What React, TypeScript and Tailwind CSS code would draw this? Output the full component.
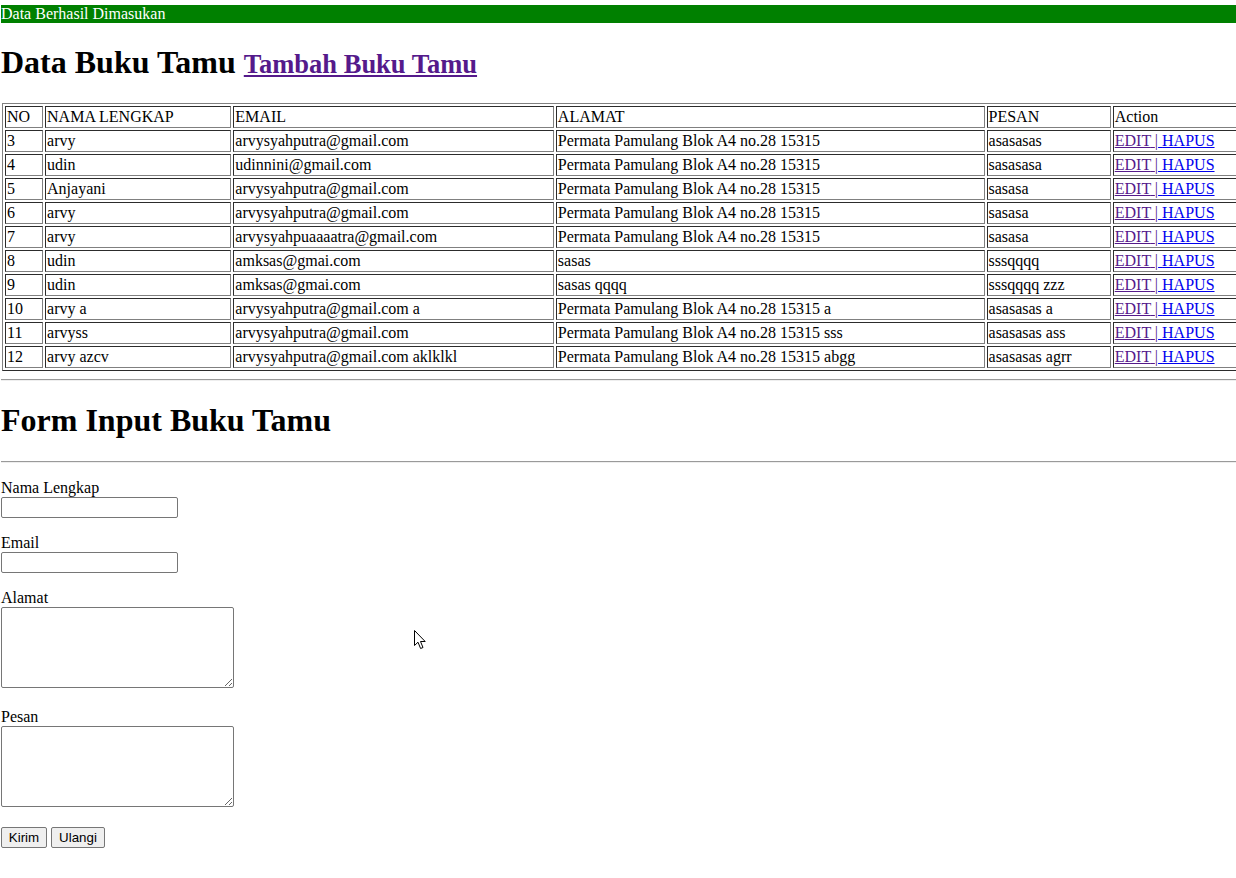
import React from "react";

const rows: [string, string, string, string, string][] = [
  ["3", "arvy", "arvysyahputra@gmail.com", "Permata Pamulang Blok A4 no.28 15315", "asasasas"],
  ["4", "udin", "udinnini@gmail.com", "Permata Pamulang Blok A4 no.28 15315", "sasasasa"],
  ["5", "Anjayani", "arvysyahputra@gmail.com", "Permata Pamulang Blok A4 no.28 15315", "sasasa"],
  ["6", "arvy", "arvysyahputra@gmail.com", "Permata Pamulang Blok A4 no.28 15315", "sasasa"],
  ["7", "arvy", "arvysyahpuaaaatra@gmail.com", "Permata Pamulang Blok A4 no.28 15315", "sasasa"],
  ["8", "udin", "amksas@gmai.com", "sasas", "sssqqqq"],
  ["9", "udin", "amksas@gmai.com", "sasas qqqq", "sssqqqq zzz"],
  ["10", "arvy a", "arvysyahputra@gmail.com a", "Permata Pamulang Blok A4 no.28 15315 a", "asasasas a"],
  ["11", "arvyss", "arvysyahputra@gmail.com", "Permata Pamulang Blok A4 no.28 15315 sss", "asasasas ass"],
  ["12", "arvy azcv", "arvysyahputra@gmail.com aklklkl", "Permata Pamulang Blok A4 no.28 15315 abgg", "asasasas agrr"],
];

const cell =
  "border border-[#808080] [border-style:inset] p-[1px] leading-[18px] h-[22px] text-left font-normal align-middle whitespace-nowrap overflow-hidden";

function Hr() {
  return <div className="h-[2px] border-t border-t-[#9a9a9a] border-b border-b-[#eeeeee]" />;
}

export default function App() {
  return (
    <div className="relative min-h-screen w-full overflow-hidden bg-white text-black font-['Liberation_Serif','Times_New_Roman',serif] text-[16px] leading-[normal]">
      <div className="pl-[1px]">
        <div className="mt-[5px] h-[18px] bg-[#008000] text-white leading-[18px]">
          Data Berhasil Dimasukan
        </div>

        <h1 className="my-[21.44px] h-[37px] text-[32px] font-bold leading-[37px] whitespace-nowrap">
          Data Buku Tamu{" "}
          <a href="#" className="text-[26.5px] text-[#551A8B] underline">
            Tambah Buku Tamu
          </a>
        </h1>

        <table className="ml-[1px] w-[1262px] table-fixed border-separate border-spacing-[2px] border border-[#808080] [border-style:outset]">
          <tbody>
            <tr>
              <td className={`${cell} w-[38px]`}>NO</td>
              <td className={`${cell} w-[186px]`}>NAMA LENGKAP</td>
              <td className={`${cell} w-[320px]`}>EMAIL</td>
              <td className={`${cell} w-[428px]`}>ALAMAT</td>
              <td className={`${cell} w-[124px]`}>PESAN</td>
              <td className={`${cell} w-[148px]`}>Action</td>
            </tr>
            {rows.map((r) => (
              <tr key={r[0]}>
                <td className={cell}>{r[0]}</td>
                <td className={cell}>{r[1]}</td>
                <td className={cell}>{r[2]}</td>
                <td className={cell}>{r[3]}</td>
                <td className={cell}>{r[4]}</td>
                <td className={cell}>
                  <a href="#" className="text-[#551A8B] underline">
                    EDIT{" "}
                  </a>
                  <span className="text-[#551A8B]">|</span>
                  <a href="#" className="text-[#0000EE] underline">
                    {" "}HAPUS
                  </a>
                </td>
              </tr>
            ))}
          </tbody>
        </table>

        <div className="mt-[8px]">
          <Hr />
        </div>

        <h1 className="my-[21.44px] h-[37px] text-[32px] font-bold leading-[37px]">
          Form Input Buku Tamu
        </h1>

        <Hr />

        <form className="flex flex-col" onSubmit={(e) => e.preventDefault()}>
          <div className="mt-[16px] flex flex-col items-start">
            <label className="block h-[18px] leading-[18px]">Nama Lengkap</label>
            <input
              type="text"
              className="h-[21px] w-[177px] rounded-[2px] border border-[#767676] bg-white px-[2px] text-[13.33px] font-['Liberation_Sans',Arial,sans-serif]"
            />
          </div>
          <div className="mt-[16px] flex flex-col items-start">
            <label className="block h-[18px] leading-[18px]">Email</label>
            <input
              type="text"
              className="h-[21px] w-[177px] rounded-[2px] border border-[#767676] bg-white px-[2px] text-[13.33px] font-['Liberation_Sans',Arial,sans-serif]"
            />
          </div>
          <div className="mt-[16px] flex flex-col items-start">
            <label className="block h-[18px] leading-[18px]">Alamat</label>
            <textarea className="h-[81px] w-[233px] resize rounded-[2px] border border-[#767676] bg-white text-[13.33px] font-['Liberation_Mono',monospace]" />
            <div className="h-[4px]" />
          </div>
          <div className="mt-[16px] flex flex-col items-start">
            <label className="block h-[18px] leading-[18px]">Pesan</label>
            <textarea className="h-[81px] w-[233px] resize rounded-[2px] border border-[#767676] bg-white text-[13.33px] font-['Liberation_Mono',monospace]" />
            <div className="h-[4px]" />
          </div>
          <div className="mt-[16px] flex items-start gap-[4px]">
            <button
              type="submit"
              className="h-[21px] w-[46px] rounded-[2px] border border-[#767676] bg-[#efefef] px-[6px] text-[13.33px] leading-[19px] text-black font-['Liberation_Sans',Arial,sans-serif]"
            >
              Kirim
            </button>
            <button
              type="reset"
              className="h-[21px] w-[54px] rounded-[2px] border border-[#767676] bg-[#efefef] px-[6px] text-[13.33px] leading-[19px] text-black font-['Liberation_Sans',Arial,sans-serif]"
            >
              Ulangi
            </button>
          </div>
        </form>
      </div>

      <svg
        className="pointer-events-none absolute left-[414px] top-[630px]"
        width="13"
        height="20"
        viewBox="0 0 13 20"
      >
        <path
          d="M0.5 0.5 L0.5 15.5 L4 12.2 L6.6 18.5 L9 17.5 L6.5 11.5 L11.2 11.5 Z"
          fill="#fff"
          stroke="#000"
          strokeWidth="1"
          strokeLinejoin="miter"
        />
      </svg>
    </div>
  );
}
